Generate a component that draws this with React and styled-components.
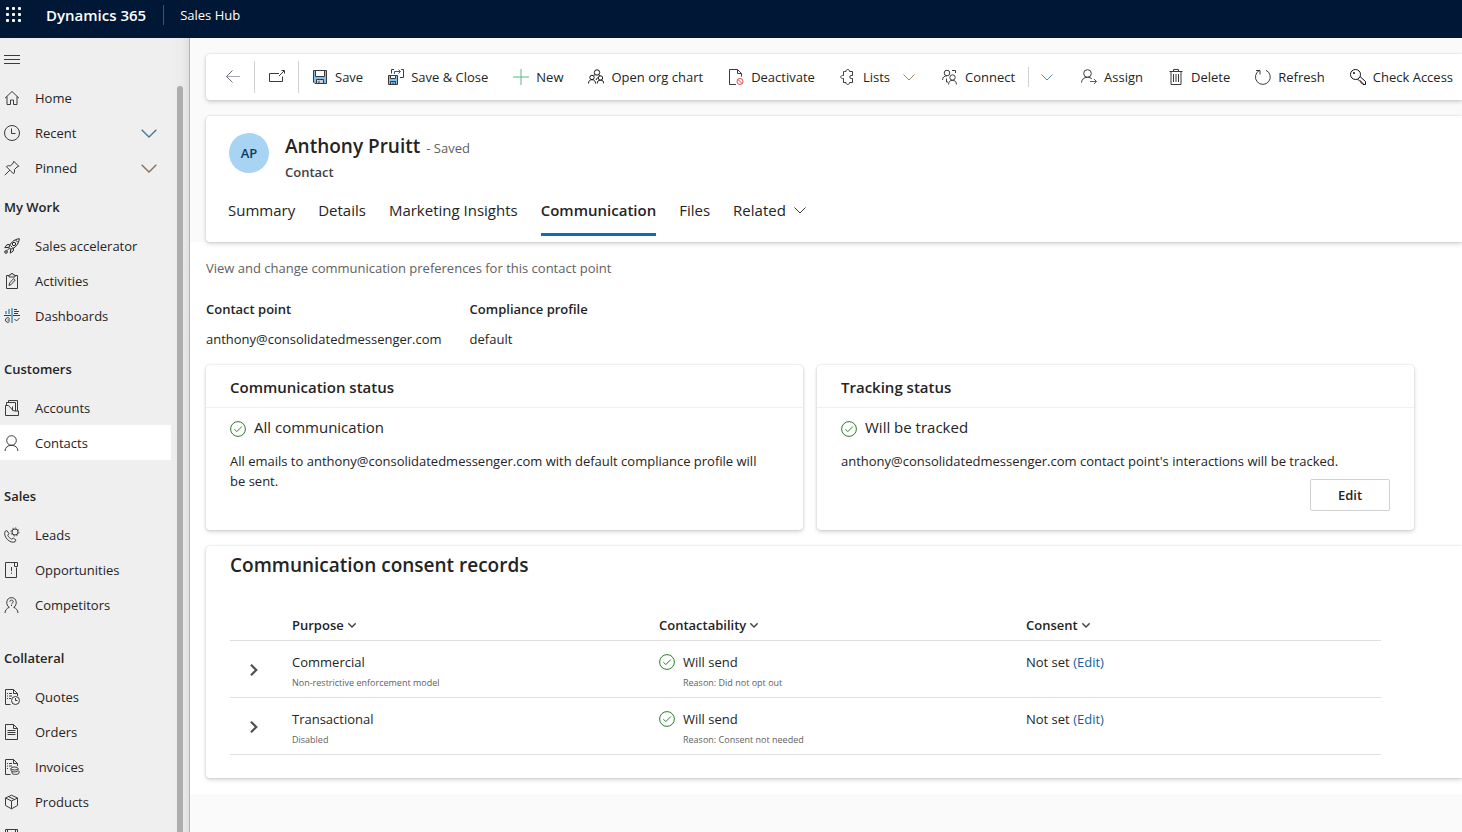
/* src/App.jsx */
import React, { useState } from 'react';
import styled, { createGlobalStyle, ThemeProvider } from 'styled-components';

const theme = {
  colors: {
    topBar: '#001736',
    page: '#fafafa',
    white: '#ffffff',
    text: '#242424',
    muted: '#616161',
    line: '#e0e0e0',
    link: '#115ea3',
    accent: '#0f6cbd',
    green: '#2b7d2b',
  },
  fonts: {
    primary: "'Open Sans', 'Noto Sans', sans-serif",
  },
  shadow: '0 0 2px rgba(0, 0, 0, 0.16), 0 2px 4px rgba(0, 0, 0, 0.16)',
};

const GlobalStyle = createGlobalStyle`
  * {
    box-sizing: border-box;
  }

  body {
    margin: 0;
    background-color: ${(props) => props.theme.colors.page};
    color: ${(props) => props.theme.colors.text};
    font-family: ${(props) => props.theme.fonts.primary};
    font-size: 13px;
    line-height: 20px;
  }

  button {
    padding: 0;
    border: none;
    background: none;
    color: inherit;
    font: inherit;
    cursor: pointer;
  }

  h1, h2, h3, p, dl, dd, ul {
    margin: 0;
    padding: 0;
  }
`;

const Page = styled.div`
  display: flex;
  flex-direction: column;
  height: 100vh;
  overflow: hidden;
`;

const TopBar = styled.header`
  display: flex;
  align-items: center;
  flex-shrink: 0;
  padding: 0 6px 8px;
  height: 38px;
  background-color: ${(props) => props.theme.colors.topBar};
  color: ${(props) => props.theme.colors.white};
`;

const Waffle = styled.button`
  display: flex;
  margin-right: 24px;
`;

const Brand = styled.a`
  padding-right: 17px;
  color: inherit;
  font-size: 15px;
  font-weight: 600;
  text-decoration: none;
`;

const AppName = styled.a`
  padding-left: 16px;
  border-left: 1px solid #42526b;
  color: inherit;
  text-decoration: none;
`;

const Body = styled.div`
  display: flex;
  flex: 1;
  min-height: 0;
`;

const SideBar = styled.nav`
  display: flex;
  flex-shrink: 0;
  width: 190px;
  border-right: 1px solid #b3b3b3;
  background: linear-gradient(to right, #efefef 170px, #ebebeb 182px, #dedede 190px);
`;

const NavColumn = styled.div`
  flex: 1;
  overflow: hidden;
`;

const MenuButton = styled.button`
  display: flex;
  align-items: center;
  height: 42px;
  padding: 2px 4px 0;
`;

const NavList = styled.ul`
  list-style: none;
`;

const NavHeading = styled.h2`
  margin-top: ${(props) => (props.$first ? '0' : '14px')};
  padding: 12px 4px 11px;
  font-size: 13px;
  font-weight: 600;
  line-height: 20px;
`;

const NavLink = styled.a`
  display: flex;
  align-items: center;
  height: 35px;
  padding: 0 14px 0 4px;
  background-color: ${(props) => (props.$active ? props.theme.colors.white : 'transparent')};
  color: inherit;
  text-decoration: none;
  white-space: nowrap;
`;

const NavLabel = styled.span`
  flex: 1;
  margin-left: 15px;
`;

const ScrollThumb = styled.div`
  width: 6px;
  margin: 48px 6px 0;
  border-radius: 3px 3px 0 0;
  background-color: #adadad;
`;

const Main = styled.main`
  flex: 1;
  min-width: 0;
  overflow: hidden;
`;

const CommandBar = styled.div`
  display: flex;
  align-items: center;
  gap: 1px;
  height: 46px;
  margin: 16px 0 16px 16px;
  padding-left: 6px;
  border-radius: 4px 0 0 4px;
  background-color: ${(props) => props.theme.colors.white};
  box-shadow: ${(props) => props.theme.shadow};
`;

const IconButton = styled.button`
  display: flex;
  align-items: center;
  justify-content: center;
  flex-shrink: 0;
  width: 43px;
  height: 32px;
  border-right: 1px solid #d1d1d1;
`;

const Command = styled.button`
  display: flex;
  align-items: center;
  flex-shrink: 0;
  gap: 7px;
  padding: 0 12px;
  white-space: nowrap;
`;

const SplitButton = styled.button`
  display: flex;
  align-items: center;
  flex-shrink: 0;
  height: 20px;
  padding: 0 15px 0 12px;
  border-left: 1px solid #d1d1d1;
`;

const ChevronSlot = styled.span`
  display: flex;
  margin: 0 2px 0 6px;
`;

/* positioned so its shadow stays above the white content below */
const RecordHeader = styled.section`
  position: relative;
  margin-left: 16px;
  padding: 17px 22px 6px;
  border-radius: 4px 0 0 4px;
  background-color: ${(props) => props.theme.colors.white};
  box-shadow: ${(props) => props.theme.shadow};
`;

const Persona = styled.div`
  display: flex;
  gap: 16px;
`;

const Avatar = styled.div`
  display: flex;
  align-items: center;
  justify-content: center;
  width: 40px;
  height: 40px;
  margin-left: 1px;
  border-radius: 50%;
  background-color: #a9d3f2;
  color: #0c3b5e;
  font-weight: 600;
`;

const RecordName = styled.h1`
  font-size: 19px;
  font-weight: 600;
  line-height: 26px;
`;

const SaveState = styled.span`
  margin-left: 6px;
  color: ${(props) => props.theme.colors.muted};
  font-size: 13px;
  font-weight: 400;
`;

const RecordType = styled.p`
  margin-top: 1px;
  color: #424242;
  font-weight: 600;
`;

const Tabs = styled.div`
  display: flex;
  gap: 23px;
  margin-top: 3px;
`;

const Tab = styled.button`
  display: flex;
  align-items: center;
  gap: 8px;
  padding: 15px 0 13px;
  font-size: 15px;
  font-weight: ${(props) => (props.$active ? 600 : 400)};
  line-height: 20px;
  border-bottom: 3px solid ${(props) => (props.$active ? props.theme.colors.accent : 'transparent')};
`;

const Content = styled.div`
  padding: 16px 0 16px 16px;
  background-color: ${(props) => props.theme.colors.white};
`;

const Hint = styled.p`
  color: ${(props) => props.theme.colors.muted};
`;

const Facts = styled.dl`
  display: flex;
  gap: 28px;
  margin-top: 21px;
`;

const FactName = styled.dt`
  margin-bottom: 10px;
  font-weight: 600;
`;

const StatusCards = styled.div`
  display: grid;
  grid-template-columns: 1fr 1fr;
  gap: 14px;
  margin: 16px 48px 16px 0;
`;

const Card = styled.section`
  border-radius: 4px;
  background-color: ${(props) => props.theme.colors.white};
  box-shadow: ${(props) => props.theme.shadow};
`;

const CardTitle = styled.h2`
  padding: 12px 24px 10px;
  border-bottom: 1px solid #f0f0f0;
  font-size: 15px;
  font-weight: 600;
  line-height: 20px;
`;

const CardBody = styled.div`
  display: flex;
  flex-direction: column;
  padding: 7px 24px 19px;
`;

const Status = styled.h3`
  display: flex;
  align-items: center;
  gap: 8px;
  margin-bottom: 12px;
  font-size: 15px;
  font-weight: 400;
  line-height: 24px;

  svg {
    margin-top: 4px;
  }
`;

const Description = styled.p`
  padding-right: 8px;
`;

const EditButton = styled.button`
  align-self: flex-end;
  width: 80px;
  height: 32px;
  margin-top: 8px;
  border: 1px solid #d1d1d1;
  border-radius: 2px;
  font-weight: 600;
`;

const ConsentCard = styled.section`
  padding: 5px 81px 23px 24px;
  border-radius: 4px 0 0 4px;
  background-color: ${(props) => props.theme.colors.white};
  box-shadow: ${(props) => props.theme.shadow};
`;

const ConsentTitle = styled.h2`
  font-size: 19px;
  font-weight: 600;
  line-height: 28px;
`;

const Table = styled.table`
  width: 100%;
  margin-top: 31px;
  border-collapse: collapse;
  table-layout: fixed;
`;

const HeadCell = styled.th`
  width: ${(props) => props.$width || 'auto'};
  padding: 5px 12px;
  border-bottom: 1px solid ${(props) => props.theme.colors.line};
  font-weight: 600;
  text-align: left;
`;

const SortButton = styled.button`
  display: flex;
  align-items: center;
  gap: 4px;
`;

const Cell = styled.td`
  padding: 11px 12px 4px;
  border-bottom: 1px solid ${(props) => props.theme.colors.line};
  vertical-align: top;
`;

const ExpandCell = styled(Cell)`
  padding: 2px 0 0;
  vertical-align: middle;

  button {
    display: flex;
    margin-left: 18px;
  }
`;

const Line = styled.div`
  display: flex;
  align-items: center;
  gap: 8px;
`;

const Note = styled.div`
  margin-top: 1px;
  padding-left: ${(props) => (props.$indent ? '24px' : '0')};
  color: ${(props) => props.theme.colors.muted};
  font-size: 9px;
  line-height: 20px;
`;

const EditLink = styled.a`
  color: ${(props) => props.theme.colors.link};
  text-decoration: none;
`;

const Icon = ({ children, size = 16, color = '#3b3b3b', width = 1 }) => (
  <svg
    width={size}
    height={size}
    viewBox="0 0 16 16"
    fill="none"
    stroke={color}
    strokeWidth={width}
    aria-hidden="true"
  >
    {children}
  </svg>
);

const Chevron = ({ color = '#424242', size = 12, width = 1 }) => (
  <svg width={size} height={size} viewBox="0 0 12 12" fill="none" stroke={color} strokeWidth={width} aria-hidden="true">
    <path d="M.5 3.5 6 9l5.5-5.5" />
  </svg>
);

const CheckCircle = () => (
  <Icon color={theme.colors.green}>
    <circle cx="8" cy="8" r="7.4" />
    <path d="m4.5 8.3 2.3 2.3 5-5" />
  </Icon>
);

const icons = {
  home: <path d="M1 8.2 8 1.5l7 6.7M3 6.6v7.9h3.5V10h3v4.5H13V6.6" />,
  recent: (
    <>
      <circle cx="8" cy="8" r="7.5" />
      <path d="M7.5 3.5v5h4" />
    </>
  ),
  pinned: <path d="m.8 15.2 5-5M9.8 1.3l5 5-1.8.7-2.7 2.7c.5 1.7.2 3.1-.8 4.1L2.4 6.7c1.1-1 2.5-1.3 4.1-.8L9.2 3z" />,
  rocket: (
    <g stroke="#222">
      <path d="M5 9.500C6 5 10 1.300 15.300.7 14.700 6 11.500 10 6.700 11.200zM5.700 6.500 3 6.700.8 9.700l4-.3M9.500 10.300l-.2 2.600-3 2.200.3-3.900" />
      <circle cx="10" cy="6" r="1.700" />
      <circle cx="2" cy="14" r="1.300" />
      <path d="m2.800 12.800 3-3M6.500 7.500l2 2M11.500 2l2.500 2.500" />
    </g>
  ),
  activities: (
    <>
      <path d="M5 2.500H2.500v13h11v-13H11M5 4V2h1.500L7 .7h2l.5 1.300H11v2z" />
      <path d="m5 12.500.6-2.500 4-4.500 1.600 1.500-4 4.500z" />
    </>
  ),
  dashboards: (
    <>
      <path d="M0 7.500h16" />
      <path stroke="#6fa8d0" strokeWidth="2" d="M8 0v15M2 3v3M5 1v5" />
      <path d="M10 1.500h3M10 3.500h5M10 5.500h4M10.500 11l2 2 3-3" />
      <path d="M5.500 10.500a2.300 2.300 0 1 0 0 3M3.500 12h2.500" />
    </>
  ),
  accounts: <path d="M1.500 15.500v-10h3l4.500 5 2 .5h3.500v4.500zM2.500 5.500v-3h9v8.500M4.500 2.500v-2h9v10.500M8.500 6.500v4" />,
  contacts: (
    <>
      <circle cx="7.500" cy="5.500" r="4.800" />
      <path d="M1 16c.3-3.500 2.500-5.700 6.500-5.700s6.200 2.200 6.500 5.700" />
    </>
  ),
  leads: (
    <>
      <path d="M1 4.500 2.800 3.500 5 6.500 3.800 8.300c.8 1.900 2 3 3.900 3.900l1.600-1.100 2.700 2-1 1.700C6.300 17-1 10 1 4.500z" />
      <circle cx="11" cy="5" r="3" />
      <path strokeDasharray="1.500 1.600" d="M11 1a4 4 0 1 1 0 8 4 4 0 0 1 0-8z" />
    </>
  ),
  opportunities: (
    <>
      <path d="M11.500.5h-10v15h11V5.500M10.500.5v4h3v-4z" />
      <path d="M7.500 5v4M7.500 10.500v1.200" />
    </>
  ),
  competitors: (
    <>
      <path d="M1 16c.2-2.800 1.600-4.600 4.300-5.700C1.500 8.500 1.800.6 7.500.6s6 7.900 2.200 9.700c2.700 1.100 4.100 2.900 4.300 5.700" />
      <path d="M5.800 4.800c0-2.300 3.400-2.300 3.400 0 0 1.200-1.700 1.200-1.700 2.500M7.500 8v1" />
    </>
  ),
  quotes: (
    <>
      <path d="M6.500 15.500h-5V.5h8l4 4v2.500M9.500.5v4h4M3 4.500h1M5 4.500h3M3 7h1M5 7h3M3 9.500h1M5 9.500h2" />
      <circle cx="11.500" cy="11.500" r="4" />
      <path d="M11.500 9v2.500h2" />
    </>
  ),
  orders: <path d="M1.500.5h8l4 4v11h-12zM9.500.5v4h4M3.500 6.500h8M3.500 8.500h8M3.500 10.500h8" />,
  invoices: (
    <>
      <path d="M6.500 15.500h-5V.5h8l4 4v2.500M9.500.5v4h4M3 4.500h1M5 4.500h3M3 7h1M5 7h3M3 9.500h1" />
      <ellipse cx="10.500" cy="9.500" rx="3.500" ry="1.500" />
      <path d="M7 9.500v2c0 1.800 7 1.800 7 0v-2M8 12.500v1.500c0 1.800 7 1.800 7 0v-2" />
    </>
  ),
  products: <path d="M7.500 1.200 13.500 4v7.500l-6 3.300-6-3.300V4zM1.500 4l6 3 6-3M7.500 7v7.800M4.500 2.600l6 3" />,
  literature: <path d="M1.500 15.500V.5h12v15zM3.500.5v3h8v-3M4 7h7" />,
  save: (
    <>
      <path fill="#83beec" d="M1.500 1.500h13v13H3l-1.500-1.500z" />
      <path fill="#fff" d="M3.500 1.500h9v6h-9z" />
      <path fill="#d0d0d0" d="M4.500 10.500h7v4h-7z" />
      <path d="M7 12v2.500" />
    </>
  ),
  saveClose: (
    <>
      <path d="M3.500 4.500v-4H6M13 .5h2.500v8H12" />
      <path fill="#83beec" d="M.5 6.500h9v9h-9z" />
      <path fill="#fff" d="M2.500 6.500h5v3h-5z" />
      <path d="M2.500 15.500v-3h5v3M5 13.500v2" />
      <path stroke="#0f6cbd" d="M6.500 5V2.500h6M10.500.5l2 2-2 2" />
    </>
  ),
  add: <path stroke="#57b98a" d="M8 0v16M0 8h16" />,
  orgChart: (
    <g stroke="#1a1a1a">
      <circle cx="9" cy="3.500" r="2.700" />
      <circle cx="4" cy="8.500" r="2.200" />
      <circle cx="12.500" cy="9" r="2.200" />
      <path d="M.5 14.500c.1-2.500 1.300-3.800 3.500-3.800s3.400 1.300 3.500 3.800M9.200 14.500c.1-2.300 1.100-3.300 3.300-3.300s3.200 1 3.300 3.300M5.500 6.300 7.500 5.700M10.500 5.700l1.800 1.100M8 11l1.500-2.500" />
    </g>
  ),
  deactivate: (
    <>
      <path d="M8 15.500H1.500V.5h8l4 4v3M9.500.5v4h4" />
      <g stroke="#e8474c">
        <circle cx="12" cy="12.500" r="3" />
        <path d="m10 10.500 4 4" />
      </g>
    </>
  ),
  lists: <path d="M4.500 2.500H6c-.3-2.600 3.800-2.600 3.500 0h3v4H11c-1.700.3-1.700 2.700 0 3h1.500v4h-3c.3 2.600-3.800 2.600-3.500 0H3.500V9.500C-.2 10-.2 6 3.500 6.500v-4z" />,
  connect: (
    <>
      <circle cx="5" cy="4" r="2.800" />
      <path d="M.5 11c.2-2.700 1.700-4.200 4.500-4.200M10 1.500h3.500V4M4.500 9.500V13H6" />
      <circle cx="10.500" cy="8.500" r="2.700" />
      <path d="M6.500 15.500c.2-2.800 1.500-4.200 4-4.200s3.800 1.400 4 4.200" />
    </>
  ),
  assign: (
    <>
      <circle cx="6.500" cy="4.500" r="3.800" />
      <path d="M.5 13.500c.3-3.200 2.500-5.200 6-5.200 2 0 3.500.6 4.500 1.700" />
      <path stroke="#0f6cbd" d="M9 12.500h6.500M13 10l2.500 2.500L13 15" />
    </>
  ),
  delete: <path d="M1.500 2.500h13M5.500 2.500v-2h5v2M3 2.500v13h10v-13M5.500 5v8M8 5v8M10.500 5v8" />,
  refresh: <path d="M11 1.300A7.400 7.400 0 1 1 4.500 1.400M1 1.500h4v4" />,
  checkAccess: (
    <g stroke="#111">
      <circle cx="5.500" cy="5.500" r="5" />
      <path d="M10 7.500l5.500 5v3h-2.500V14h-2v-2H9.500L7.500 10" />
      <path d="M3.500 3.500h1v1h-1z" />
    </g>
  ),
};

const navGroups = [
  {
    items: [
      { icon: 'home', label: 'Home' },
      { icon: 'recent', label: 'Recent', chevron: '#4a7694' },
      { icon: 'pinned', label: 'Pinned', chevron: '#8c6e50' },
    ],
  },
  {
    title: 'My Work',
    items: [
      { icon: 'rocket', label: 'Sales accelerator' },
      { icon: 'activities', label: 'Activities' },
      { icon: 'dashboards', label: 'Dashboards' },
    ],
  },
  {
    title: 'Customers',
    items: [
      { icon: 'accounts', label: 'Accounts' },
      { icon: 'contacts', label: 'Contacts' },
    ],
  },
  {
    title: 'Sales',
    items: [
      { icon: 'leads', label: 'Leads' },
      { icon: 'opportunities', label: 'Opportunities' },
      { icon: 'competitors', label: 'Competitors' },
    ],
  },
  {
    title: 'Collateral',
    items: [
      { icon: 'quotes', label: 'Quotes' },
      { icon: 'orders', label: 'Orders' },
      { icon: 'invoices', label: 'Invoices' },
      { icon: 'products', label: 'Products' },
      { icon: 'literature', label: 'Sales Literature' },
    ],
  },
];

const commands = [
  { icon: 'save', label: 'Save' },
  { icon: 'saveClose', label: 'Save & Close' },
  { icon: 'add', label: 'New' },
  { icon: 'orgChart', label: 'Open org chart' },
  { icon: 'deactivate', label: 'Deactivate' },
  { icon: 'lists', label: 'Lists', chevron: '#a08562' },
  { icon: 'connect', label: 'Connect', split: true },
  { icon: 'assign', label: 'Assign' },
  { icon: 'delete', label: 'Delete' },
  { icon: 'refresh', label: 'Refresh' },
  { icon: 'checkAccess', label: 'Check Access' },
];

const tabs = ['Summary', 'Details', 'Marketing Insights', 'Communication', 'Files', 'Related'];

const consentRows = [
  { purpose: 'Commercial', model: 'Non-restrictive enforcement model', reason: 'Did not opt out' },
  { purpose: 'Transactional', model: 'Disabled', reason: 'Consent not needed' },
];

const Navigation = () => {
  const [active, setActive] = useState('Contacts');

  return (
    <SideBar>
      <NavColumn>
        <MenuButton aria-label="Expand or collapse menu">
          <Icon>
            <path d="M0 3.500h16M0 7.500h16M0 11.500h16" />
          </Icon>
        </MenuButton>
        {navGroups.map((group, index) => (
          <div key={group.title || 'top'}>
            {group.title && <NavHeading $first={index === 1}>{group.title}</NavHeading>}
            <NavList>
              {group.items.map((item) => (
                <li key={item.label}>
                  <NavLink
                    href="#"
                    $active={active === item.label}
                    onClick={() => setActive(item.label)}
                  >
                    <Icon>{icons[item.icon]}</Icon>
                    <NavLabel>{item.label}</NavLabel>
                    {item.chevron && <Chevron size={16} color={item.chevron} />}
                  </NavLink>
                </li>
              ))}
            </NavList>
          </div>
        ))}
      </NavColumn>
      <ScrollThumb />
    </SideBar>
  );
};

const Commands = () => (
  <CommandBar>
    <IconButton aria-label="Go back">
      <Icon color="#6b6b78">
        <path stroke="#a9a9b6" d="M15 7.500H1.500" />
        <path d="M7.500 1.500l-6 6 6 6" />
      </Icon>
    </IconButton>
    <IconButton aria-label="Open in new window">
      <Icon>
        <path d="M10 4.500H.5v8h13V7.500M10 7l5-5M12.500 1.500h3v3" />
      </Icon>
    </IconButton>
    {commands.map((command) => (
      <React.Fragment key={command.label}>
        <Command>
          <Icon>{icons[command.icon]}</Icon>
          {command.label}
          {command.chevron && (
            <ChevronSlot>
              <Chevron color={command.chevron} />
            </ChevronSlot>
          )}
        </Command>
        {command.split && (
          <SplitButton aria-label={`More ${command.label} options`}>
            <Chevron color="#5a8aa6" />
          </SplitButton>
        )}
      </React.Fragment>
    ))}
  </CommandBar>
);

const ConsentTable = () => (
  <Table>
    <thead>
      <tr>
        <HeadCell $width="50px" aria-label="Expand" />
        {['Purpose', 'Contactability', 'Consent'].map((name) => (
          <HeadCell key={name}>
            <SortButton>
              {name}
              <Chevron size={8} width={2} />
            </SortButton>
          </HeadCell>
        ))}
      </tr>
    </thead>
    <tbody>
      {consentRows.map((row) => (
        <tr key={row.purpose}>
          <ExpandCell>
            <button aria-label={`Expand ${row.purpose}`}>
              <Icon size={12} width={3} color="#505050">
                <path d="m4 1 7 7-7 7" />
              </Icon>
            </button>
          </ExpandCell>
          <Cell>
            <div>{row.purpose}</div>
            <Note>{row.model}</Note>
          </Cell>
          <Cell>
            <Line>
              <CheckCircle />
              Will send
            </Line>
            <Note $indent>Reason: {row.reason}</Note>
          </Cell>
          <Cell>
            Not set <EditLink href="#">(Edit)</EditLink>
          </Cell>
        </tr>
      ))}
    </tbody>
  </Table>
);

const App = () => {
  const [activeTab, setActiveTab] = useState('Communication');

  return (
    <ThemeProvider theme={theme}>
      <GlobalStyle />
      <Page>
        <TopBar>
          <Waffle aria-label="App launcher">
            <svg width="16" height="16" viewBox="0 0 16 16" fill="#fff" aria-hidden="true">
              {[0, 6, 12].map((y) =>
                [0, 6, 12].map((x) => <rect key={`${x}-${y}`} x={x} y={y} width="3" height="3" rx="1" />)
              )}
            </svg>
          </Waffle>
          <Brand href="#">Dynamics 365</Brand>
          <AppName href="#">Sales Hub</AppName>
        </TopBar>
        <Body>
          <Navigation />
          <Main>
            <Commands />
            <RecordHeader>
              <Persona>
                <Avatar>AP</Avatar>
                <div>
                  <RecordName>
                    Anthony Pruitt
                    <SaveState>- Saved</SaveState>
                  </RecordName>
                  <RecordType>Contact</RecordType>
                </div>
              </Persona>
              <Tabs role="tablist">
                {tabs.map((tab) => (
                  <Tab
                    key={tab}
                    role="tab"
                    aria-selected={activeTab === tab}
                    $active={activeTab === tab}
                    onClick={() => setActiveTab(tab)}
                  >
                    {tab}
                    {tab === 'Related' && <Chevron />}
                  </Tab>
                ))}
              </Tabs>
            </RecordHeader>
            <Content>
              <Hint>View and change communication preferences for this contact point</Hint>
              <Facts>
                <div>
                  <FactName>Contact point</FactName>
                  <dd>anthony@consolidatedmessenger.com</dd>
                </div>
                <div>
                  <FactName>Compliance profile</FactName>
                  <dd>default</dd>
                </div>
              </Facts>
              <StatusCards>
                <Card>
                  <CardTitle>Communication status</CardTitle>
                  <CardBody>
                    <Status>
                      <CheckCircle />
                      All communication
                    </Status>
                    <Description>
                      All emails to anthony@consolidatedmessenger.com with default compliance profile
                      will be sent.
                    </Description>
                  </CardBody>
                </Card>
                <Card>
                  <CardTitle>Tracking status</CardTitle>
                  <CardBody>
                    <Status>
                      <CheckCircle />
                      Will be tracked
                    </Status>
                    <Description>
                      anthony@consolidatedmessenger.com contact point's interactions will be tracked.
                    </Description>
                    <EditButton>Edit</EditButton>
                  </CardBody>
                </Card>
              </StatusCards>
              <ConsentCard>
                <ConsentTitle>Communication consent records</ConsentTitle>
                <ConsentTable />
              </ConsentCard>
            </Content>
          </Main>
        </Body>
      </Page>
    </ThemeProvider>
  );
};

export default App;
